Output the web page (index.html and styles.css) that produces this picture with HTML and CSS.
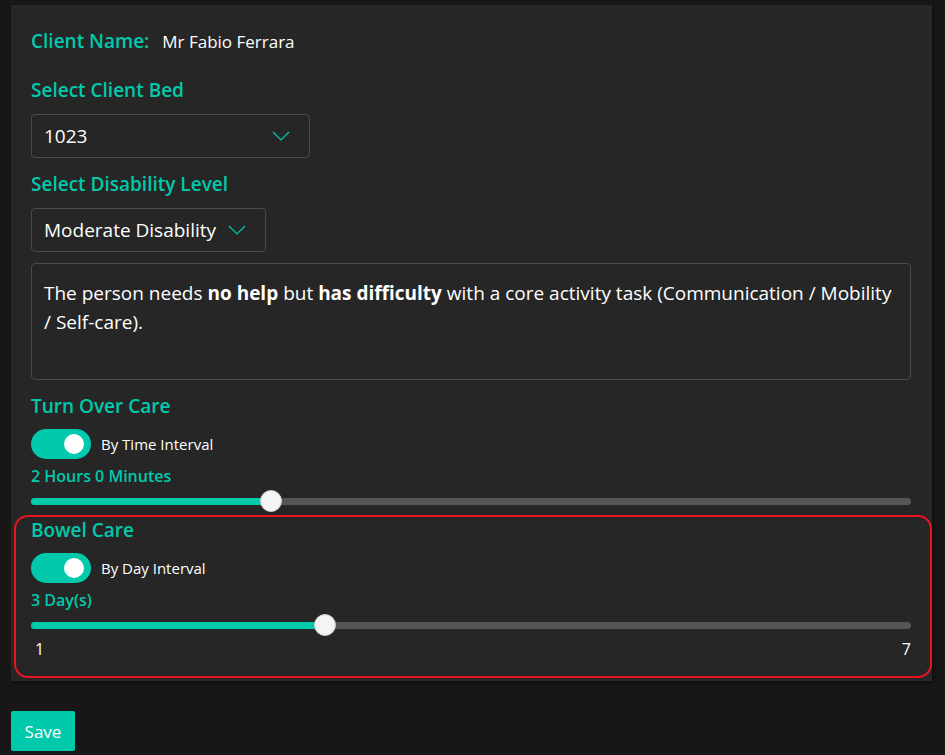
FILE: index.html
```html
<!DOCTYPE html>
<html lang="en">
<head>
    <meta charset="UTF-8">
    <title>Client Care</title>
    <link rel="stylesheet" href="styles.css">
</head>
<body>

    <div class="panel">
        <div class="client-row">
            <span class="label">Client Name:</span>
            <span class="client-name">Mr Fabio Ferrara</span>
        </div>

        <div class="label field-label">Select Client Bed</div>
        <div class="select select-bed">
            <span>1023</span>
            <svg class="chevron" width="18" height="10" viewBox="0 0 18 10"><polyline points="1,1 9,9 17,1" fill="none" stroke="#00c9ac" stroke-width="1.2"/></svg>
        </div>

        <div class="label field-label">Select Disability Level</div>
        <div class="select select-level">
            <span>Moderate Disability</span>
            <svg class="chevron" width="18" height="10" viewBox="0 0 18 10"><polyline points="1,1 9,9 17,1" fill="none" stroke="#00c9ac" stroke-width="1.2"/></svg>
        </div>

        <div class="description">
            The person needs <strong>no help</strong> but <strong>has difficulty</strong> with a core activity task (Communication / Mobility / Self-care).
        </div>

        <div class="label section-label">Turn Over Care</div>
        <div class="toggle-row">
            <div class="toggle"><div class="knob"></div></div>
            <span>By Time Interval</span>
        </div>
        <div class="value">2 Hours 0 Minutes</div>
        <div class="slider">
            <div class="track"><div class="fill" style="width: 240px"></div></div>
            <div class="thumb" style="left: 240px"></div>
        </div>

        <div class="highlight">
            <div class="label section-label">Bowel Care</div>
            <div class="toggle-row">
                <div class="toggle"><div class="knob"></div></div>
                <span>By Day Interval</span>
            </div>
            <div class="value">3 Day(s)</div>
            <div class="slider">
                <div class="track"><div class="fill" style="width: 294px"></div></div>
                <div class="thumb" style="left: 294px"></div>
            </div>
            <div class="range-limits">
                <span>1</span>
                <span>7</span>
            </div>
        </div>
    </div>

    <button class="save-btn">Save</button>

</body>
</html>
```

FILE: styles.css
```css
body {
    font-family: 'Open Sans', 'Noto Sans', sans-serif;
    background: #171717;
    margin: 0;
    padding: 0;
    color: #fff;
}

.panel {
    width: 880px;
    margin: 5px 0 0 11px;
    padding: 24px 21px 3px 20px;
    background: #262626;
    box-shadow: 2px 2px 3px rgba(0, 0, 0, 0.35);
}

.label {
    color: #00c9ac;
    font-weight: 600;
    font-size: 19px;
    line-height: 24px;
}

.client-row {
    display: flex;
    align-items: center;
    gap: 13px;
    height: 24px;
}

.client-name {
    font-size: 17px;
}

.field-label {
    margin-top: 25px;
}

.select {
    display: flex;
    align-items: center;
    justify-content: space-between;
    height: 42px;
    margin-top: 12px;
    padding: 0 19px 0 12px;
    border: 1px solid #4a4a4a;
    border-radius: 4px;
    font-size: 19px;
    box-sizing: content-box;
}

.select-bed {
    width: 246px;
}

.select-level {
    width: 202px;
}

.select + .field-label {
    margin-top: 14px;
}

.description {
    height: 84px;
    margin-top: 11px;
    padding: 15px 12px 16px 12px;
    border: 1px solid #4a4a4a;
    border-radius: 4px;
    font-size: 19px;
    line-height: 29px;
}

.description strong {
    font-weight: 700;
}

.section-label {
    margin-top: 14px;
}

.toggle-row {
    display: flex;
    align-items: center;
    gap: 10px;
    margin-top: 11px;
    font-size: 15px;
}

.toggle {
    width: 60px;
    height: 30px;
    padding: 0 7px;
    box-sizing: border-box;
    border-radius: 15px;
    background: #00c9ac;
    display: flex;
    align-items: center;
    justify-content: flex-end;
}

.knob {
    width: 20px;
    height: 20px;
    border-radius: 50%;
    background: #fff;
}

.value {
    color: #00c9ac;
    font-weight: 600;
    font-size: 16px;
    line-height: 22px;
    margin-top: 6px;
}

.slider {
    position: relative;
    height: 22px;
    margin-top: 3px;
    display: flex;
    align-items: center;
}

.track {
    width: 100%;
    height: 7px;
    border-radius: 4px;
    background: #555;
    overflow: hidden;
}

.fill {
    height: 100%;
    background: #00c9ac;
}

.thumb {
    position: absolute;
    top: 0;
    width: 22px;
    height: 22px;
    margin-left: -11px;
    box-sizing: border-box;
    border-radius: 50%;
    background: #f4f4f4;
    border: 1px solid #cfcfcf;
}

.highlight {
    margin: 3px -21px 0 -17px;
    padding: 0 19px 17px 15px;
    border: 2px solid #e8141f;
    border-radius: 14px;
}

.highlight .section-label {
    margin-top: 1px;
}

.range-limits {
    display: flex;
    justify-content: space-between;
    font-size: 16px;
    line-height: 20px;
    margin-top: 3px;
    padding-left: 4px;
}

.save-btn {
    display: block;
    margin: 30px 0 0 11px;
    width: 64px;
    height: 40px;
    border: none;
    border-radius: 2px;
    background: #00c9ac;
    color: #fff;
    font-family: 'Open Sans', 'Noto Sans', sans-serif;
    font-size: 17px;
}
```
